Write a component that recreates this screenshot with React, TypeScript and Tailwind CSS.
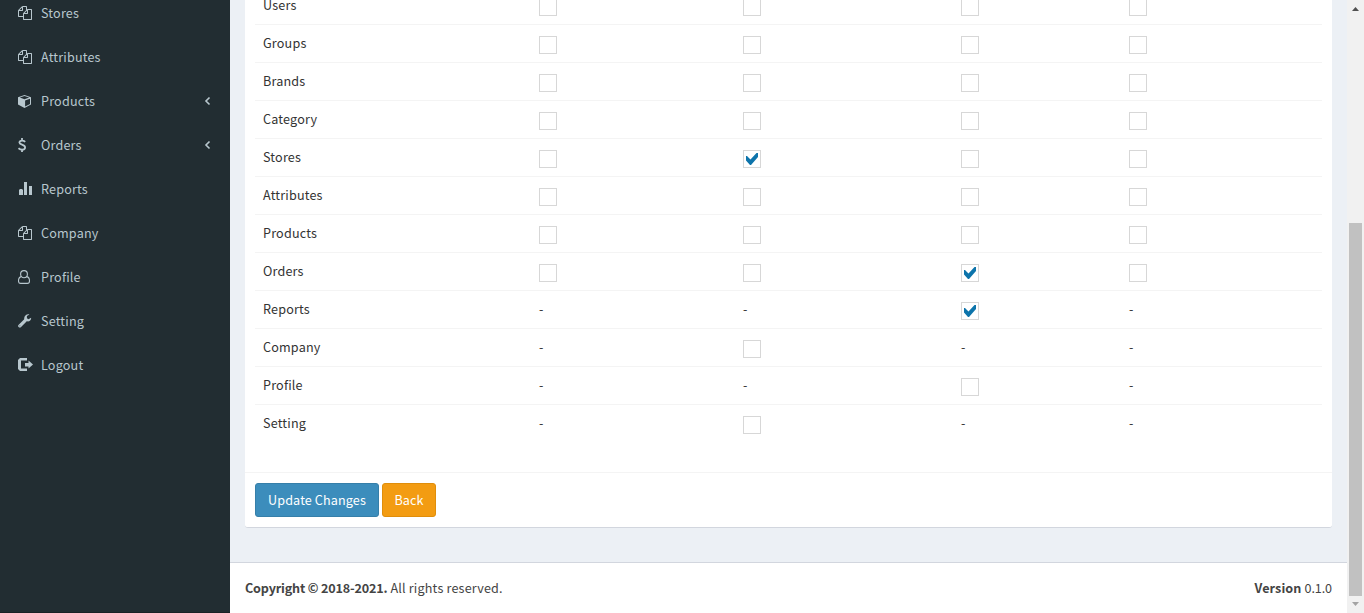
import type { ReactNode } from "react";

const copyPath =
  "M1696 384q40 0 68 28t28 68v1216q0 40-28 68t-68 28h-960q-40 0-68-28t-28-68v-288h-544q-40 0-68-28t-28-68v-672q0-40 20-88t48-76l408-408q28-28 76-48t88-20h416q40 0 68 28t28 68v328q68-40 128-40h416zm-544 213l-299 299h299v-299zm-640-384l-299 299h299v-299zm196 647l316-316v-416h-384v416q0 40-28 68t-68 28h-416v640h512v-256q0-40 20-88t48-76zm956 804v-1152h-384v416q0 40-28 68t-68 28h-416v640h896z";

function Icon({ children }: { children: ReactNode }) {
  return (
    <svg width="16" height="16" viewBox="0 0 16 16" fill="currentColor" className="mt-0.5 shrink-0">
      {children}
    </svg>
  );
}

const CopyIcon = () => (
  <Icon>
    <path transform="scale(0.0078125)" d={copyPath} />
  </Icon>
);

const CubeIcon = () => (
  <Icon>
    <path
      fillRule="evenodd"
      d="M6.5 1 L13 3.2 V10.6 L6.5 14 L0 10.6 V3.2 Z M6.5 2 L1.8 3.6 L6.5 5.3 L11.2 3.6 Z M7.1 6.4 V12.6 L12 10 V4.7 Z"
    />
  </Icon>
);

const DollarIcon = () => (
  <Icon>
    <path
      fill="none"
      stroke="currentColor"
      strokeWidth="1.8"
      d="M4 0V2.5M4 11.5V14M7.2 3.8C6.2 2.9 5 2.6 4 2.6C2.3 2.6 1.4 3.5 1.4 4.5C1.4 7.1 7.1 6.2 7.1 9.4C7.1 10.7 5.8 11.6 4.1 11.6C2.7 11.6 1.6 11.1 0.5 10.2"
    />
  </Icon>
);

const BarsIcon = () => (
  <Icon>
    <path d="M1 8L2 7H4L5 8V13H1ZM6 0H9V13H6ZM11 4H14V13H11Z" />
  </Icon>
);

const UserIcon = () => (
  <Icon>
    <path
      fill="none"
      stroke="currentColor"
      strokeWidth="1.1"
      d="M6 0.6C8.1 0.6 9.4 2.1 9.4 4.1C9.4 6.2 8 7.8 6 7.8C4 7.8 2.6 6.2 2.6 4.1C2.6 2.1 3.9 0.6 6 0.6ZM3.2 6.6C1.2 7 0.5 8.9 0.5 11C0.5 12.6 1.3 13.4 2.6 13.4H9.4C10.7 13.4 11.5 12.6 11.5 11C11.5 8.9 10.8 7 8.8 6.6"
    />
  </Icon>
);

const WrenchIcon = () => (
  <Icon>
    <path
      fillRule="evenodd"
      d="M11.4 0.4L8.9 1.9V4.3L10.5 5.2L13.1 3.7C13.5 5.8 11.7 7.5 9.7 7.4C9 7.3 8.7 7.3 8.3 7.7L3.1 13C2.3 13.8 1.3 13.8 0.6 13.1C-0.1 12.4 -0.1 11.4 0.7 10.7L6 5.6C6.3 5.3 6.2 4.8 6.2 4.2C6.2 1.8 8.8 -0.3 11.4 0.4ZM1.5 11.5V12.3H2.3V11.5Z"
    />
  </Icon>
);

const LogoutIcon = () => (
  <Icon>
    <path d="M2 0H9V2.5H3V10.5H9V13H2L0 11V2Z M7 5H10.5V2.5L15 6.5L10.5 10.5V8.5H7Z" />
  </Icon>
);

const menu = [
  { label: "Stores", icon: <CopyIcon /> },
  { label: "Attributes", icon: <CopyIcon /> },
  { label: "Products", icon: <CubeIcon />, sub: true },
  { label: "Orders", icon: <DollarIcon />, sub: true },
  { label: "Reports", icon: <BarsIcon /> },
  { label: "Company", icon: <CopyIcon /> },
  { label: "Profile", icon: <UserIcon /> },
  { label: "Setting", icon: <WrenchIcon /> },
  { label: "Logout", icon: <LogoutIcon /> },
];

/* One character per permission: o = empty box, x = ticked box, - = not available */
const rows: [string, string][] = [
  ["Users", "oooo"],
  ["Groups", "oooo"],
  ["Brands", "oooo"],
  ["Category", "oooo"],
  ["Stores", "oxoo"],
  ["Attributes", "oooo"],
  ["Products", "oooo"],
  ["Orders", "ooxo"],
  ["Reports", "--x-"],
  ["Company", "-o--"],
  ["Profile", "--o-"],
  ["Setting", "-o--"],
];

function Cell({ state }: { state: string }) {
  if (state === "-") return <div className="pl-2">-</div>;
  return (
    <div className="pt-[3px] pl-2">
      <div className="h-[18px] w-[18px] border border-[#d7d7d7] bg-white">
        {state === "x" && (
          <svg width="16" height="16" viewBox="0 0 16 16" fill="#0d74ab">
            <path d="M2 5H3L6.5 8.5L12.5 2H14V6L7 14H6L2 9.5Z" />
          </svg>
        )}
      </div>
    </div>
  );
}

export default function App() {
  return (
    <div className="flex h-[613px] w-[1364px] overflow-hidden bg-[#ecf0f5] font-['Noto_Sans_CJK_SC','Noto_Sans',sans-serif] text-[12.6px] leading-5 tracking-[0.18px] text-[#333]">
      <aside className="h-full w-[230px] shrink-0 border-b border-[#1a2226] bg-[#222d32] text-[#b8c7ce]">
        <nav className="-mt-[9px] flex flex-col">
          {menu.map((item) => (
            <a key={item.label} className="flex h-11 items-center pr-[18px] pl-[18px]">
              {item.icon}
              <span className="ml-[7px] flex-1">{item.label}</span>
              {item.sub && (
                <svg width="8" height="10" viewBox="0 0 8 10" fill="none" stroke="currentColor" strokeWidth="1.6">
                  <path d="M5.5 1.5L2 5L5.5 8.5" />
                </svg>
              )}
            </a>
          ))}
        </nav>
      </aside>
      <div className="flex min-w-0 flex-1 flex-col">
        <main className="h-[562px] px-[15px]">
          <section className="h-[528px] rounded-b-[3px] border-b border-[#d2d6de] bg-white">
            <div className="h-[472px] overflow-hidden px-2.5">
              <div className="-mt-[14px]">
                {rows.map(([name, states]) => (
                  <div
                    key={name}
                    className="grid h-[38px] grid-cols-[276px_204px_218px_168px_1fr] border-t border-[#f4f4f4] pt-2"
                  >
                    <div className="pl-2">{name}</div>
                    {states.split("").map((s, i) => (
                      <Cell key={i} state={s} />
                    ))}
                  </div>
                ))}
              </div>
            </div>
            <div className="flex gap-[3px] border-t border-[#f4f4f4] p-2.5 text-white">
              <button className="h-[34px] w-[124px] rounded-[3px] border border-[#367fa9] bg-[#3c8dbc] tracking-[0.12px]">
                Update Changes
              </button>
              <button className="h-[34px] w-[54px] rounded-[3px] border border-[#e08e0b] bg-[#f39c12] tracking-[0.05px]">
                Back
              </button>
            </div>
          </section>
        </main>
        <footer className="flex h-[51px] justify-between border-t border-[#d2d6de] bg-white px-[15px] pt-[15px] text-[#444]">
          <div>
            <b className="tracking-[-0.17px]">Copyright © 2018-2021.</b> All rights reserved.
          </div>
          <div>
            <b className="tracking-[0.1px]">Version</b> <span className="tracking-[-0.1px]">0.1.0</span>
          </div>
        </footer>
      </div>
      <div className="flex w-[17px] shrink-0 flex-col items-center bg-[#f1f1f1]">
        <svg width="17" height="17" viewBox="0 0 17 17" fill="#505050" className="shrink-0">
          <path d="M5 11L8.5 7L12 11Z" />
        </svg>
        <div className="mt-[206px] mr-[1px] h-[373px] w-[13px] shrink-0 bg-[#c1c1c1]" />
        <svg width="17" height="17" viewBox="0 0 17 17" fill="#a3a3a3" className="shrink-0">
          <path d="M5 6L8.5 10L12 6Z" />
        </svg>
      </div>
    </div>
  );
}
